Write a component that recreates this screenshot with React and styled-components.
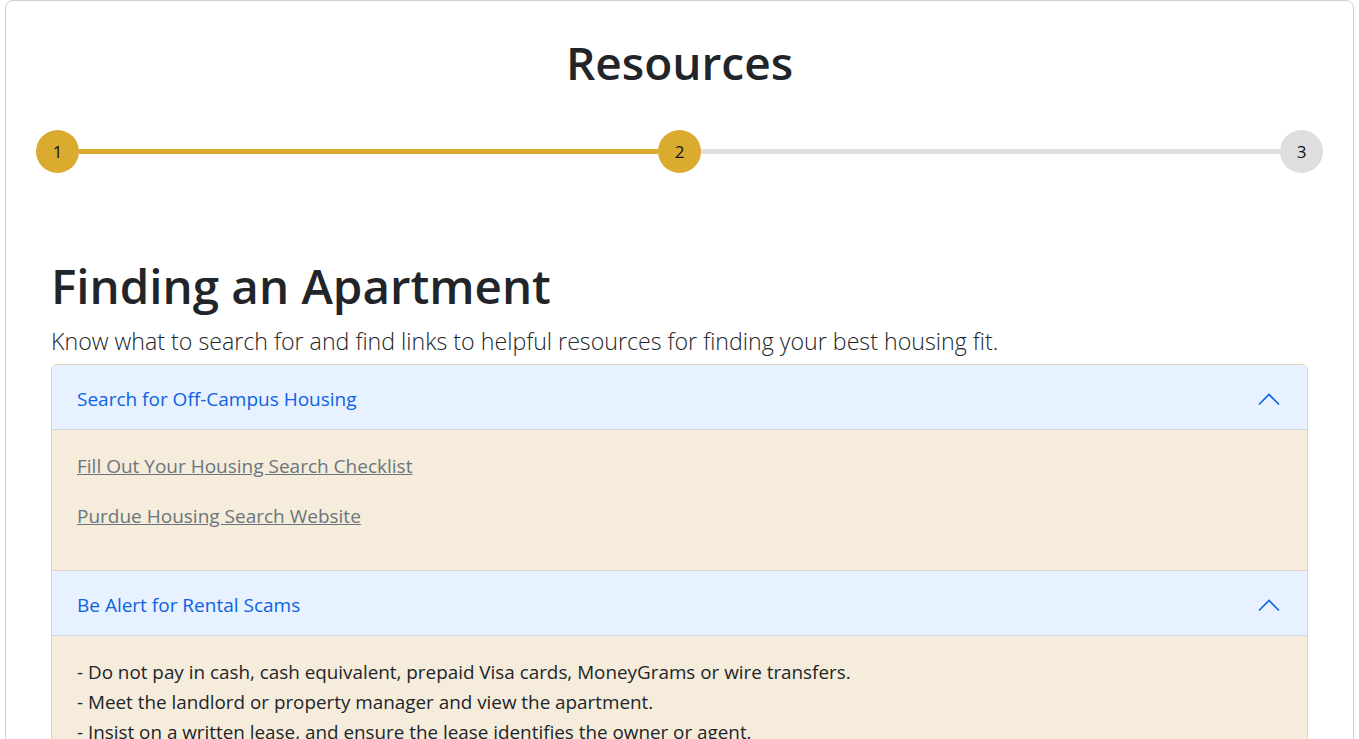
import React, { useState } from 'react';
import styled, { createGlobalStyle } from 'styled-components';

const GlobalStyle = createGlobalStyle`
  body {
    margin: 0;
    font-family: "Open Sans", "Noto Sans", sans-serif;
    color: #212529;
    background: #fff;
  }
`;

// Styled components
const Page = styled.div`
  padding: 0 5px;
`;

const Card = styled.div`
  border: 1px solid #cfcfcf;
  border-radius: 8px;
  padding: 34px 30px 40px;
  background: #fff;
`;

const Title = styled.h1`
  margin: 0;
  text-align: center;
  font-size: 46px;
  font-weight: 600;
  line-height: 1.2;
  color: #212529;
`;

const Stepper = styled.div`
  display: flex;
  align-items: center;
  margin-top: 40px;
`;

const StepCircle = styled.div`
  width: 43px;
  height: 43px;
  border-radius: 50%;
  flex: none;
  display: flex;
  align-items: center;
  justify-content: center;
  font-size: 17px;
  color: #111;
  background: ${(p) => (p.$done ? '#daab2f' : '#dedede')};
`;

const Connector = styled.div`
  flex: 1;
  height: 5px;
  background: ${(p) => (p.$done ? '#daab2f' : '#e0e0e0')};
`;

const Section = styled.section`
  padding: 0 15px;
  margin-top: 84px;
`;

const SectionTitle = styled.h2`
  margin: 0;
  font-size: 47.5px;
  font-weight: 600;
  line-height: 57.6px;
`;

const Lead = styled.p`
  margin: 11px 0 8px;
  font-size: 23.2px;
  font-weight: 300;
  line-height: 30px;
`;

const Accordion = styled.div`
  border: 1px solid #dcd3c2;
  border-radius: 6px;
  overflow: hidden;
`;

const Item = styled.div`
  & + & {
    border-top: 1px solid #dcd3c2;
  }
`;

const Header = styled.button`
  box-sizing: border-box;
  width: 100%;
  display: flex;
  align-items: center;
  justify-content: space-between;
  height: 65px;
  padding: 4px 26px 0 25px;
  border: 0;
  border-bottom: ${(p) => (p.$open ? '1px solid #cfd6e2' : '0')};
  background: ${(p) => (p.$open ? '#e7f1ff' : '#fff')};
  color: ${(p) => (p.$open ? '#0c63e4' : '#212529')};
  font-family: inherit;
  font-size: 19px;
  text-align: left;
  cursor: pointer;
`;

const Chevron = styled.svg`
  width: 24px;
  height: 14px;
  transform: ${(p) => (p.$open ? 'none' : 'rotate(180deg)')};
`;

const Body = styled.div`
  background: #f5ecdb;
  padding: ${(p) => p.$pad};
`;

const LinkRow = styled.a`
  display: block;
  color: #6c757d;
  font-size: 19px;
  text-decoration: underline;
  margin-bottom: 26px;
  line-height: 24px;
`;

const TextLine = styled.div`
  font-size: 18.85px;
  line-height: 30px;
  color: #212529;
`;

const steps = [1, 2, 3];
const current = 2;

const scamTips = [
  '- Do not pay in cash, cash equivalent, prepaid Visa cards, MoneyGrams or wire transfers.',
  '- Meet the landlord or property manager and view the apartment.',
  '- Insist on a written lease, and ensure the lease identifies the owner or agent.',
  '- Never give out personal information such as your social security number or bank details.',
  '- If a deal sounds too good to be true, it probably is.',
];

const ChevronIcon = ({ open }) => (
  <Chevron $open={open} viewBox="0 0 24 14" fill="none">
    <path d="M2 12.5 L12 2.5 L22 12.5" stroke="#0c63e4" strokeWidth="1.6" />
  </Chevron>
);

const App = () => {
  const [open, setOpen] = useState({ search: true, scams: true });
  const toggle = (key) => setOpen((o) => ({ ...o, [key]: !o[key] }));

  return (
    <Page>
      <GlobalStyle />
      <Card>
        <Title>Resources</Title>
        <Stepper>
          {steps.map((s, i) => (
            <React.Fragment key={s}>
              <StepCircle $done={s <= current}>{s}</StepCircle>
              {i < steps.length - 1 && <Connector $done={s < current} />}
            </React.Fragment>
          ))}
        </Stepper>

        <Section>
          <SectionTitle>Finding an Apartment</SectionTitle>
          <Lead>Know what to search for and find links to helpful resources for finding your best housing fit.</Lead>
          <Accordion>
            <Item>
              <Header $open={open.search} onClick={() => toggle('search')}>
                Search for Off-Campus Housing
                <ChevronIcon open={open.search} />
              </Header>
              {open.search && (
                <Body $pad="24px 26px 16px 25px">
                  <LinkRow href="#">Fill Out Your Housing Search Checklist</LinkRow>
                  <LinkRow href="#">Purdue Housing Search Website</LinkRow>
                </Body>
              )}
            </Item>
            <Item>
              <Header $open={open.scams} onClick={() => toggle('scams')}>
                Be Alert for Rental Scams
                <ChevronIcon open={open.scams} />
              </Header>
              {open.scams && (
                <Body $pad="21px 26px 24px 25px">
                  {scamTips.map((t) => (
                    <TextLine key={t}>{t}</TextLine>
                  ))}
                </Body>
              )}
            </Item>
          </Accordion>
        </Section>
      </Card>
    </Page>
  );
};

export default App;
